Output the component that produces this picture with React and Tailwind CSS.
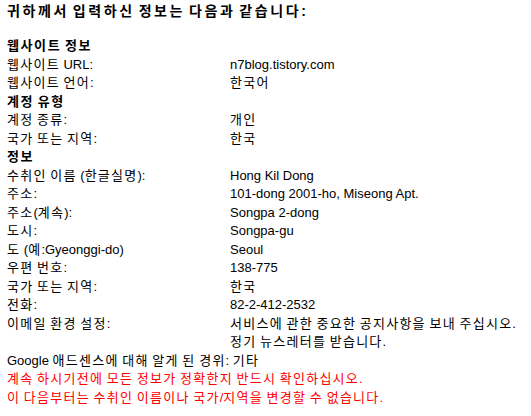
const font = { fontFamily: '"Liberation Sans", "Noto Sans CJK KR", sans-serif' };

const HANGUL = /([\uAC00-\uD7A3\u3131-\u318E]+)/;

// Hangul in the fallback font runs narrower than the reference, so widen those runs only
function K({ text, track = 'tracking-[1.25px]' }) {
  return text.split(HANGUL).map((p, i) =>
    i % 2 === 1 ? (
      <span key={i} className={track}>
        {p}
      </span>
    ) : (
      <span key={i}>{p}</span>
    )
  );
}

function Row({ label, value }) {
  return (
    <div className="flex leading-[18.5px]">
      <div className="w-[223px] shrink-0">
        <K text={label} />
      </div>
      <div>
        {[].concat(value).map((v) => (
          <div key={v}>
            <K text={v} />
          </div>
        ))}
      </div>
    </div>
  );
}

function Heading({ children }) {
  return (
    <div className="font-bold leading-[18.5px]">
      <K text={children} track="tracking-[1.6px]" />
    </div>
  );
}

export default function App() {
  return (
    <div className="w-[531px] h-[416px] bg-white text-black text-[13px] pl-[7px] pt-[2px]" style={font}>
      <div className="font-bold text-[14px] leading-[18px]">
        <K text="귀하께서 입력하신 정보는 다음과 같습니다:" track="tracking-[2.6px]" />
      </div>
      <div className="mt-[17px]">
        <Heading>웹사이트 정보</Heading>
        <Row label="웹사이트 URL:" value="n7blog.tistory.com" />
        <Row label="웹사이트 언어:" value="한국어" />
        <Heading>계정 유형</Heading>
        <Row label="계정 종류:" value="개인" />
        <Row label="국가 또는 지역:" value="한국" />
        <Heading>정보</Heading>
        <Row label="수취인 이름 (한글실명):" value="Hong Kil Dong" />
        <Row label="주소:" value="101-dong 2001-ho, Miseong Apt." />
        <Row label="주소(계속):" value="Songpa 2-dong" />
        <Row label="도시:" value="Songpa-gu" />
        <Row label="도 (예:Gyeonggi-do)" value="Seoul" />
        <Row label="우편 번호:" value="138-775" />
        <Row label="국가 또는 지역:" value="한국" />
        <Row label="전화:" value="82-2-412-2532" />
        <Row
          label="이메일 환경 설정:"
          value={['서비스에 관한 중요한 공지사항을 보내 주십시오.', '정기 뉴스레터를 받습니다.']}
        />
        <div className="leading-[18.5px]">
          <K text="Google 애드센스에 대해 알게 된 경위: 기타" />
        </div>
        <div className="leading-[18.5px] text-[#f00]">
          <div>
            <K text="계속 하시기전에 모든 정보가 정확한지 반드시 확인하십시오." />
          </div>
          <div>
            <K text="이 다음부터는 수취인 이름이나 국가/지역을 변경할 수 없습니다." />
          </div>
        </div>
      </div>
    </div>
  );
}
